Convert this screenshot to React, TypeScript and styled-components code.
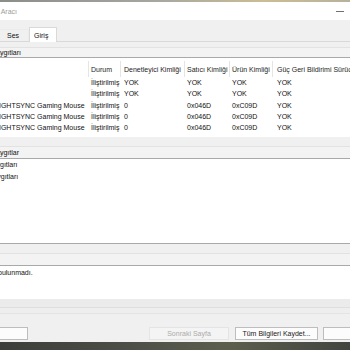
import styled, { createGlobalStyle } from "styled-components";

const Global = createGlobalStyle`
  html, body { margin: 0; padding: 0; background: #f0f0f0; }
  body { font-family: "Liberation Sans", Arial, sans-serif; font-size: 7px; color: #111; }
  * { box-sizing: border-box; }
`;

const Screen = styled.div`
  width: 350px;
  height: 350px;
  overflow: hidden;
  display: flex;
  flex-direction: column;
  background: #f0f0f0;
`;

const DesktopEdge = styled.div<{ $h: number; $dark?: boolean }>`
  flex: none;
  height: ${(p) => p.$h}px;
  background: ${(p) =>
    p.$dark
      ? "linear-gradient(90deg,#3b3e3a,#4a4e46 35%,#5c5e4d 65%,#42453f)"
      : "linear-gradient(90deg,#8b8d89,#a6a7a1 45%,#cbbd93 75%,#b8b29c)"};
`;

const Window = styled.div`
  flex: none;
  height: 340px;
  width: 470px;
  margin-left: -60px;
  display: flex;
  flex-direction: column;
  background: #f0f0f0;
`;

const TitleBar = styled.div`
  flex: none;
  height: 18px;
  background: #fff;
  display: flex;
  align-items: center;
  color: #9c9c9c;
  white-space: nowrap;
`;

/* the caption is cut by the screen edge: keep its right end in place */
const TitleText = styled.div`
  flex: none;
  width: 77px;
  display: flex;
  justify-content: flex-end;
`;

const MinGlyph = styled.span`
  margin-left: auto;
  margin-right: 66px;
  width: 8px;
  height: 1px;
  background: #707070;
`;

const TabStrip = styled.div`
  flex: none;
  height: 22px;
  display: flex;
  align-items: flex-end;
  padding-left: 4px;
  border-bottom: 1px solid #d9d9d9;
`;

const Tab = styled.div<{ $w: number; $pad: number; $active?: boolean }>`
  flex: none;
  width: ${(p) => p.$w}px;
  height: ${(p) => (p.$active ? 15 : 12)}px;
  margin-bottom: ${(p) => (p.$active ? -1 : 0)}px;
  padding-left: ${(p) => p.$pad}px;
  display: flex;
  align-items: center;
  white-space: nowrap;
  background: ${(p) => (p.$active ? "#fff" : "#f0f0f0")};
  border: 1px solid ${(p) => (p.$active ? "#d9d9d9" : "#ececec")};
  border-bottom: none;
  position: relative;
  z-index: ${(p) => (p.$active ? 1 : 0)};
`;

const Gap = styled.div<{ $h: number }>`
  flex: none;
  height: ${(p) => p.$h}px;
`;

const SectionHeader = styled.div<{ $h: number }>`
  flex: none;
  height: ${(p) => p.$h}px;
  display: flex;
  align-items: center;
  padding-left: 20px;
  white-space: nowrap;
  background: #f3f3f3;
  border-top: 1px solid #e2e2e2;
  border-bottom: 1px solid #a9a9a9;
`;

const ListBox = styled.div`
  flex: none;
  height: 79px;
  margin: 0 8px;
  background: #fff;
  padding-top: 3px;
`;

const COLS = "140px 32px 64px 45px 43px 1fr";

const HeadRow = styled.div`
  display: grid;
  grid-template-columns: ${COLS};
  height: 16px;
  color: #1e1e1e;
`;

const HeadCell = styled.div<{ $pad: number; $sep?: boolean }>`
  display: flex;
  align-items: center;
  padding-left: ${(p) => p.$pad}px;
  white-space: nowrap;
  overflow: hidden;
  border-left: 1px solid ${(p) => (p.$sep ? "#e5e5e5" : "transparent")};
`;

const Row = styled.div`
  display: grid;
  grid-template-columns: ${COLS};
  height: 11.3px;
`;

const Cell = styled.div<{ $pad: number }>`
  display: flex;
  align-items: center;
  padding-left: ${(p) => p.$pad}px;
  white-space: nowrap;
  overflow: hidden;
`;

const TreeBox = styled.div`
  flex: none;
  height: 85px;
  margin: 0 8px;
  background: #fff;
  border-bottom: 1px solid #a9a9a9;
`;

const TreeItem = styled.div`
  height: 11.5px;
  display: flex;
  align-items: center;
  padding-left: 28px;
  white-space: nowrap;
`;

const Notes = styled.div`
  flex: none;
  height: 33px;
  margin: 0 8px;
  background: #fff;
  padding: 1px 0 0 25px;
  line-height: 11px;
  white-space: nowrap;
`;

const Band = styled.div<{ $h: number; $bg: string; $line: string }>`
  flex: none;
  height: ${(p) => p.$h}px;
  background: ${(p) => p.$bg};
  border-bottom: 1px solid ${(p) => p.$line};
`;

const ButtonRow = styled.div`
  flex: none;
  height: 28px;
  display: flex;
  align-items: flex-start;
  padding-top: 13px;
`;

const Btn = styled.div<{ $w: number; $ml: number; $disabled?: boolean }>`
  flex: none;
  width: ${(p) => p.$w}px;
  height: 13px;
  margin-left: ${(p) => p.$ml}px;
  display: flex;
  align-items: center;
  justify-content: center;
  white-space: nowrap;
  background: ${(p) => (p.$disabled ? "#f4f4f4" : "#fcfcfc")};
  border: 1px solid ${(p) => (p.$disabled ? "#e4e4e4" : "#bdbdbd")};
  color: ${(p) => (p.$disabled ? "#ababab" : "#1a1a1a")};
`;

const heads = [
  { t: "Ad", pad: 28 },
  { t: "Durum", pad: 2 },
  { t: "Denetleyici Kimliği", pad: 3 },
  { t: "Satıcı Kimliği", pad: 2 },
  { t: "Ürün Kimliği", pad: 2 },
  { t: "Güç Geri Bildirimi Sürücüsü", pad: 4 },
];

const rows = [
  ["Klavye", "İliştirilmiş", "YOK", "YOK", "YOK", "YOK"],
  ["Fare", "İliştirilmiş", "YOK", "YOK", "YOK", "YOK"],
  ["G502 LIGHTSYNC Gaming Mouse", "İliştirilmiş", "0", "0x046D", "0xC09D", "YOK"],
  ["G502 LIGHTSYNC Gaming Mouse", "İliştirilmiş", "0", "0x046D", "0xC09D", "YOK"],
  ["G502 LIGHTSYNC Gaming Mouse", "İliştirilmiş", "0", "0x046D", "0xC09D", "YOK"],
];

export default function App() {
  return (
    <Screen>
      <Global />
      <DesktopEdge $h={2} />
      <Window>
        <TitleBar>
          <TitleText>DirectX Tanılama Aracı</TitleText>
          <MinGlyph />
        </TitleBar>
        <TabStrip>
          <Tab $w={28} $pad={5}>Sistem</Tab>
          <Tab $w={27} $pad={5}>Ekran</Tab>
          <Tab $w={30} $pad={7}>Ses</Tab>
          <Tab $w={28} $pad={4} $active>Giriş</Tab>
        </TabStrip>
        <Gap $h={5} />
        <SectionHeader $h={11}>DirectInput Aygıtları</SectionHeader>
        <ListBox>
          <HeadRow>
            {heads.map((h, i) => (
              <HeadCell key={h.t} $pad={h.pad} $sep={i > 0}>
                {h.t}
              </HeadCell>
            ))}
          </HeadRow>
          {rows.map((r, ri) => (
            <Row key={ri}>
              {r.map((c, ci) => (
                <Cell key={ci} $pad={heads[ci].pad + (ci > 0 ? 1 : 0)}>
                  {c}
                </Cell>
              ))}
            </Row>
          ))}
        </ListBox>
        <Gap $h={9} />
        <SectionHeader $h={13}>Girişle İlgili Aygıtlar</SectionHeader>
        <TreeBox>
          <TreeItem>USB Aygıtları</TreeItem>
          <TreeItem>PS/2 Aygıtları</TreeItem>
        </TreeBox>
        <Gap $h={9} />
        <SectionHeader $h={13}>Notlar</SectionHeader>
        <Notes>• Sorun bulunmadı.</Notes>
        <Band $h={9} $bg="#ebebeb" $line="#dedede" />
        <Band $h={6} $bg="#eeeeee" $line="#e4e4e4" />
        <ButtonRow>
          <Btn $w={88} $ml={0}>Yardım</Btn>
          <Btn $w={80} $ml={121} $disabled>Sonraki Sayfa</Btn>
          <Btn $w={83} $ml={6}>Tüm Bilgileri Kaydet...</Btn>
          <Btn $w={73} $ml={5}>Çıkış</Btn>
        </ButtonRow>
      </Window>
      <DesktopEdge $h={8} $dark />
    </Screen>
  );
}
